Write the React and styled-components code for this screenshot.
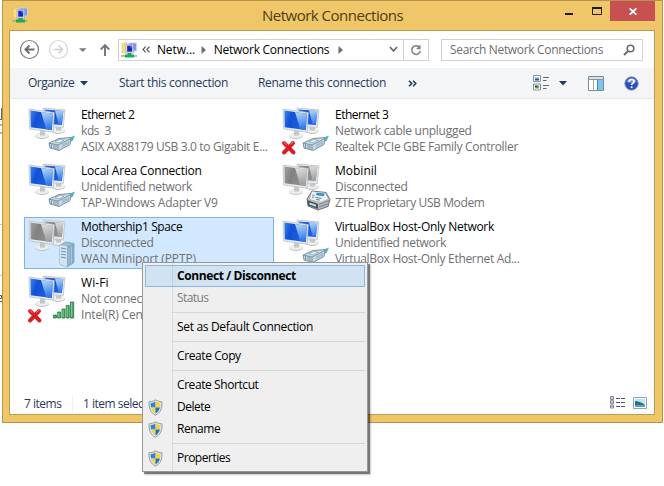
import React from "react";
import styled, { createGlobalStyle, css } from "styled-components";

const GlobalStyle = createGlobalStyle`
  * { box-sizing: border-box; }
  body { margin: 0; background: #fff; font: 12px/16px "Open Sans", "Noto Sans", sans-serif; color: #000; overflow: hidden; }
  svg { display: block; flex: none; }
`;

const Desktop = styled.div`
  position: relative;
  display: flex;
  width: 664px;
  height: 486px;
  background: #fff;
`;

const PageBehind = styled.div`
  width: 2px;
  flex: none;
  overflow: hidden;
`;

const Window = styled.div`
  width: 661px;
  height: 423px;
  flex: none;
  display: flex;
  flex-direction: column;
  padding: 0 7px 7px 6px;
  background: #efc668;
  border: 1px solid #b5954d;
`;

const TitleBar = styled.div`
  height: 29px;
  display: flex;
  align-items: flex-start;
  padding-left: 3px;
`;

const TitleIcon = styled.div`
  padding-top: 6px;
  width: 250px;
`;

const Label = styled.span`
  white-space: pre;
  letter-spacing: ${(p) => p.$ls || 0}px;
`;

const Title = styled(Label)`
  font-size: 15px;
  line-height: 20px;
  padding-top: 4px;
  color: #4f3d15;
  flex: 1;
`;

const WindowButton = styled.div`
  width: 27px;
  height: 20px;
  display: flex;
  align-items: center;
  justify-content: center;
`;

const CloseButton = styled(WindowButton)`
  width: 45px;
  background: #c75050;
`;

const Content = styled.div`
  flex: 1;
  display: flex;
  flex-direction: column;
  background: #fff;
  border: 1px solid #bd9c50;
`;

const NavBar = styled.div`
  height: 37px;
  display: flex;
  align-items: center;
  padding-left: 10px;
`;

const NavButtons = styled.div`
  display: flex;
  align-items: center;
  width: 98px;
`;

const AddressBar = styled.div`
  width: 311px;
  height: 22px;
  display: flex;
  align-items: center;
  border: 1px solid #d2d2d2;
  padding-left: 2px;
`;

const Crumb = styled(Label)`
  width: ${(p) => p.$w}px;
`;

const Refresh = styled.div`
  width: 25px;
  height: 20px;
  border-left: 1px solid #d2d2d2;
  display: flex;
  align-items: center;
  justify-content: center;
`;

const SearchBox = styled.div`
  width: 202px;
  height: 22px;
  margin-left: 12px;
  padding: 0 7px 0 8px;
  display: flex;
  align-items: center;
  justify-content: space-between;
  border: 1px solid #d2d2d2;
  color: #6d6d6d;
`;

const CommandBar = styled.div`
  height: 31px;
  display: flex;
  align-items: center;
  padding-left: 18px;
  background: #f4f5f7;
  border-bottom: 1px solid #e4e8f0;
  color: #27395c;
`;

const Command = styled.div`
  width: ${(p) => p.$w}px;
  display: flex;
  align-items: center;
  gap: ${(p) => p.$gap || 6}px;
`;

const List = styled.div`
  flex: 1;
  display: grid;
  grid-template-columns: 250px 250px;
  grid-auto-rows: 52px;
  gap: 4px;
  padding: 6px 0 0 14px;
`;

const Item = styled.div`
  display: flex;
  gap: 4px;
  border: 1px solid transparent;
  ${(p) =>
    p.$selected &&
    css`
      background: #d1e8ff;
      border-color: #7fb4e4;
    `}
`;

const ItemText = styled.div`
  display: flex;
  flex-direction: column;
  padding-top: 1px;
  white-space: nowrap;
`;

const Detail = styled(Label)`
  color: #6f7072;
`;

const StatusBar = styled.div`
  height: 23px;
  display: flex;
  align-items: flex-start;
  padding: 5px 7px 0 14px;
  color: #2b3a60;
`;

const StatusCount = styled(Label)`
  width: 49px;
  border-right: 1px solid #eef0f4;
  margin-right: 10px;
`;

const StatusText = styled(Label)`
  flex: 1;
`;

const ViewModes = styled.div`
  display: flex;
  gap: 8px;
`;

const Menu = styled.div`
  position: absolute;
  left: 142px;
  top: 262px;
  width: 226px;
  height: 210px;
  padding: 2px;
  border: 1px solid #979797;
  background: linear-gradient(90deg, #efefef 0 29px, #dcdcdc 29px 30px, #efefef 30px);
  box-shadow: 2px 2px 1px rgba(0, 0, 0, 0.45), 3px 3px 2px rgba(0, 0, 0, 0.15);
`;

const MenuItem = styled.div`
  height: 22px;
  display: flex;
  align-items: center;
  border: 1px solid transparent;
  color: ${(p) => (p.$disabled ? "#7a7a7a" : "#000")};
  ${(p) =>
    p.$active &&
    css`
      background: linear-gradient(90deg, transparent 26px, #bcd0e6 26px 27px, transparent 27px), #d1e2f2;
      border-color: #8ab6e2;
      font-weight: 700;
    `}
`;

const MenuIcon = styled.div`
  width: 31px;
  padding-left: 2px;
`;

const Separator = styled.div`
  height: 1px;
  margin: 3px 0 3px 27px;
  background: #d5d5d5;
`;

const NetIcon = () => (
  <svg width="17" height="16" viewBox="0 0 17 16">
    <path d="M1 1.500l5-1v10.500H1z" fill="#f7e07c" stroke="#d9c365" strokeWidth=".6" />
    <path d="M8 1h7.500v8H8z" fill="#7e97d8" stroke="#c8d3ee" />
    <path d="M5 2.500h7.500v8.500H5z" fill="#dfe7f8" stroke="#8899c4" strokeWidth=".6" />
    <path d="M6.200 3.700h5v6h-5z" fill="#1d24b8" />
    <path d="M8 3.700h3.200v3z" fill="#4f6be8" />
    <path d="M0 14h16" stroke="#8fb5a2" strokeWidth="1.600" />
    <path d="M6.500 11h4v1.500H13v3H4v-3h2.500z" fill="#23a659" />
  </svg>
);

const Gradients = () => (
  <svg width="0" height="0">
    <defs>
      <linearGradient id="screen-on" x1="0" y1="0" x2="1" y2="0.3">
        <stop offset="0" stopColor="#3f86ee" />
        <stop offset=".35" stopColor="#1350d6" />
        <stop offset="1" stopColor="#1c62e0" />
      </linearGradient>
      <linearGradient id="screen-off" x1="0" y1="0" x2="1" y2="0.3">
        <stop offset="0" stopColor="#a2a2a2" />
        <stop offset=".4" stopColor="#818181" />
        <stop offset="1" stopColor="#949494" />
      </linearGradient>
      <linearGradient id="shine-on" x1="0" y1="0" x2="0.2" y2="1">
        <stop offset="0" stopColor="#b9dbfb" />
        <stop offset="1" stopColor="#2f79ea" />
      </linearGradient>
      <linearGradient id="shine-off" x1="0" y1="0" x2="0.2" y2="1">
        <stop offset="0" stopColor="#dedede" />
        <stop offset="1" stopColor="#a0a0a0" />
      </linearGradient>
    </defs>
  </svg>
);

const Monitor = ({ d, shine, screen, off, base }) => (
  <g>
    <ellipse cx={base[0]} cy={base[1] + 0.5} rx="7" ry="2.9" fill="#c0c3c5" />
    <ellipse cx={base[0]} cy={base[1]} rx="6.700" ry="2.500" fill="#eceeef" />
    <path d={`M${base[0] - 2} ${base[1]}v-6h5v6z`} fill="#c3c7c9" />
    <path d={d} fill="#e3e7e9" stroke="#b9bfc4" strokeWidth=".7" />
    <path d={screen} fill={`url(#screen-${off ? "off" : "on"})`} />
    <path d={shine} fill={`url(#shine-${off ? "off" : "on"})`} />
  </g>
);

const Plug = () => (
  <g strokeLinejoin="round">
    <path d="M41 33l9-3.500-2.500 5.500-7 2z" fill="#48b5bd" />
    <path d="M24 37l10-4.500 12-1-1 7-11 6-9-2.500z" fill="#c5d8e3" stroke="#6f8b9d" strokeWidth=".9" />
    <path d="M24 37l9 2 12-6M33 39v5M26.500 38v4M29 38.500v4M31 39v4" fill="none" stroke="#6d8799" strokeWidth=".8" />
    <path d="M30 35.500l5-2 4 .5-5 3z" fill="#eff6fa" stroke="#7895a8" strokeWidth=".6" />
    <path d="M37 38l7-3v3l-7 3.500z" fill="#a4bfd2" />
  </g>
);

const Modem = () => (
  <g strokeLinejoin="round">
    <path d="M28 37l5-8 14 1.500 4 7-2 7-10 3.500-10-4z" fill="#b4bcc2" stroke="#60676c" strokeWidth=".9" />
    <path d="M33 29.500l13 1.500 3 6-8 3-10-3z" fill="#edf0f2" />
    <path d="M37.500 30.500l8 1-.5 2.800-8-1z" fill="#3594cc" />
    <path d="M33.500 33l2 .3M33 35l2 .3M36.500 35.500l6 .8M37 37.500l4 .6" stroke="#6f7a81" />
    <path d="M28.500 38l10.500 4v5l-10-3.500z" fill="#4c545a" />
    <path d="M30.500 40.500l6.500 2.200v2l-6.500-2.200z" fill="#c1dfe8" />
    <path d="M40 42.500l10-4M40 45l9-3" stroke="#7b8489" />
  </g>
);

const Server = () => (
  <g>
    <path d="M35 27l6-3 8 1.500v19L42 49l-7-3z" fill="#9dbcd5" stroke="#6d93b3" strokeWidth=".7" />
    <path d="M35 27l7 1.500V49l-7-3z" fill="#d4e4f0" />
    <path d="M36 30l5 1M36 33l5 1M36 36l5 1M36 39l5 1" stroke="#7096b6" strokeWidth="1.100" />
    <path d="M42 28.500l7-3v19l-7 4.500z" fill="#82a9c8" />
    <path d="M44 29.500v17M46.500 28.500v17" stroke="#bad3e4" strokeWidth=".8" />
  </g>
);

const Signal = () => (
  <g fill="#48a969" stroke="#247844" strokeWidth=".8">
    <path d="M28.500 41h3v3h-3zM32.700 38h3v6h-3zM37 35h3v9h-3zM41.200 31.500h3v12.500h-3zM45.500 28h3.200v16h-3.200z" />
    <path d="M33.700 39v4M38 36v7M42.200 32.500v10.500M46.500 29v14" stroke="#94d6a8" />
  </g>
);

const RedCross = () => (
  <g fill="none" strokeLinecap="round">
    <path d="M5 37l9.500 9.500M14 37L5 46.500" stroke="#c63a3f" strokeWidth="4" />
    <path d="M5 37l9.500 9.500M14 37L5 46.500" stroke="#e3151d" strokeWidth="2.500" />
    <path d="M4.800 36.300l2.500 2.400M13.800 36.300l-2 2" stroke="#f58b8c" strokeWidth="1" />
  </g>
);

const ADAPTERS = { plug: Plug, modem: Modem, server: Server, signal: Signal };

const ConnectionIcon = ({ kind, off, error }) => {
  const Adapter = ADAPTERS[kind];
  return (
    <svg width="52" height="50" viewBox="0 0 52 50">
      <Monitor
        off={off}
        base={[33, 24.5]}
        d="M18 2l22 1.800-1.800 18L20 20.500z"
        screen="M19.700 3.500l18.600 1.600-1.500 14-15.800-1.300z"
        shine="M30 4.400l8.300.7-1.500 14-3-.2z"
      />
      <Monitor
        off={off}
        base={[17, 29.5]}
        d="M4 3l25.300 3.500-1.100 19.800L4.500 23z"
        screen="M5.400 4.600l22.400 3.100-1 16.300L5.800 21.300z"
        shine="M16 6.100l11.800 1.600-1 16.300-5.500-.7z"
      />
      <Adapter />
      {error && <RedCross />}
    </svg>
  );
};

const Shield = () => (
  <svg width="15" height="17" viewBox="0 0 15 17">
    <path d="M7.500.8C5.300 2.200 3.300 2.700 1 2.800c-.2 6.800 1.500 11 6.500 13.400C12.500 13.800 14.200 9.600 14 2.800 11.700 2.700 9.700 2.200 7.500.8z" fill="#dfe2e4" stroke="#8c959c" strokeWidth=".9" />
    <path d="M7.500 2.600C5.800 3.600 4.200 4.100 2.600 4.200c0 1.700.1 3 .5 4.300h4.400z" fill="#2f86cf" />
    <path d="M7.500 2.600c1.700 1 3.300 1.500 4.900 1.600 0 1.700-.1 3-.5 4.300H7.500z" fill="#f7d33f" />
    <path d="M3.100 8.500c.8 2.800 2.100 4.600 4.400 5.900V8.500z" fill="#f7d33f" />
    <path d="M11.900 8.500c-.8 2.800-2.100 4.600-4.400 5.900V8.500z" fill="#2372bd" />
  </svg>
);

const Triangle = ({ right }) =>
  right ? (
    <svg width="5" height="8" viewBox="0 0 5 8"><path d="M.5 0v8L5 4z" fill="#6f6f6f" /></svg>
  ) : (
    <svg width="8" height="5" viewBox="0 0 8 5"><path d="M0 0h8L4 4.500z" fill="#1e395b" /></svg>
  );

const CONNECTIONS = [
  { kind: "plug", lines: [["Ethernet 2", -0.5], ["kds  3", -0.42], ["ASIX AX88179 USB 3.0 to Gigabit E...", -0.35]] },
  { kind: "plug", error: true, lines: [["Ethernet 3", -0.5], ["Network cable unplugged", -0.28], ["Realtek PCIe GBE Family Controller", -0.32]] },
  { kind: "plug", lines: [["Local Area Connection", -0.2], ["Unidentified network", -0.37], ["TAP-Windows Adapter V9", -0.22]] },
  { kind: "modem", off: true, lines: [["Mobinil", 0], ["Disconnected", -0.29], ["ZTE Proprietary USB Modem", -0.38]] },
  { kind: "server", off: true, selected: true, lines: [["Mothership1 Space", -0.38], ["Disconnected", -0.29], ["WAN Miniport (PPTP)", -0.12]] },
  { kind: "plug", lines: [["VirtualBox Host-Only Network", -0.3], ["Unidentified network", -0.37], ["VirtualBox Host-Only Ethernet Ad...", -0.31]] },
  { kind: "signal", error: true, lines: [["Wi-Fi", 0.08], ["Not connected", -0.29], ["Intel(R) Centrino(R)", -0.2]] },
];

const MENU = [
  { text: "Connect / Disconnect", ls: -0.4, active: true },
  { text: "Status", ls: -0.6, disabled: true },
  null,
  { text: "Set as Default Connection", ls: -0.32 },
  null,
  { text: "Create Copy", ls: -0.4 },
  null,
  { text: "Create Shortcut", ls: -0.42 },
  { text: "Delete", ls: -0.5, shield: true },
  { text: "Rename", ls: -0.46, shield: true },
  null,
  { text: "Properties", ls: -0.49, shield: true },
];

export default function App() {
  return (
    <Desktop>
      <GlobalStyle />
      <PageBehind>
        <svg width="2" height="486">
          <path d="M1.500 108v11M0 119.500h2M1 124v2M1 132v2" stroke="#666" />
          <path d="M0 295.500h1.500v3H0M0 301.500h2" fill="none" stroke="#555" />
          <path d="M0 224.500h2M0 275.500h2" stroke="#ccc" />
        </svg>
        <Gradients />
      </PageBehind>
      <Window>
        <TitleBar>
          <TitleIcon><NetIcon /></TitleIcon>
          <Title $ls={-0.5}>Network Connections</Title>
          <WindowButton>
            <svg width="9" height="8"><path d="M0 7h8" stroke="#221c10" strokeWidth="2" /></svg>
          </WindowButton>
          <WindowButton>
            <svg width="10" height="8"><path d="M.5 0v7.500h9V0" fill="none" stroke="#221c10" /><path d="M0 1h10" stroke="#221c10" strokeWidth="2" /></svg>
          </WindowButton>
          <CloseButton>
            <svg width="8" height="7" viewBox="0 0 8 7"><path d="M.7.3l6.600 6.400M7.300.3L.7 6.700" stroke="#fff" strokeWidth="1.700" /></svg>
          </CloseButton>
        </TitleBar>
        <Content>
          <NavBar>
            <NavButtons>
              <svg width="98" height="22" viewBox="0 0 98 22" fill="none">
                <circle cx="9.500" cy="10.500" r="9" stroke="#7c7c7c" strokeWidth="1.200" />
                <path d="M14.500 10.500H6M9.500 6.500L5.500 10.500l4 4" stroke="#6e6e6e" strokeWidth="2" />
                <circle cx="38.500" cy="10.500" r="9" stroke="#d4d4d4" strokeWidth="1.200" />
                <path d="M33.500 10.500H42M38.500 6.500l4 4-4 4" stroke="#cfcfcf" strokeWidth="1.500" />
                <path d="M59 9.300h7.500L62.800 13z" fill="#7a7a7a" />
                <path d="M85 17V6.500M80.800 10.500L85 6.200l4.200 4.300" stroke="#757575" strokeWidth="1.900" />
              </svg>
            </NavButtons>
            <AddressBar>
              <NetIcon />
              <Crumb $w={4} />
              <Crumb $w={15}>
                <svg width="8" height="7" viewBox="0 0 8 7" fill="none"><path d="M3.700.7L1 3.500l2.700 2.800M7.500.7L4.800 3.500l2.700 2.800" stroke="#555" strokeWidth="1.100" /></svg>
              </Crumb>
              <Crumb $w={44} $ls={-0.11}>Netw...</Crumb>
              <Crumb $w={13}><Triangle right /></Crumb>
              <Crumb $w={125} $ls={-0.26}>Network Connections</Crumb>
              <Crumb $w={51}><Triangle right /></Crumb>
              <Crumb $w={14}>
                <svg width="9" height="7" viewBox="0 0 9 7" fill="none"><path d="M1 1l3.500 4L8 1" stroke="#666" strokeWidth="1.700" /></svg>
              </Crumb>
              <Refresh>
                <svg width="12" height="12" viewBox="0 0 12 12" fill="none">
                  <path d="M9 2.900A4.300 4.300 0 1 0 10.300 7" stroke="#7d7d7d" strokeWidth="1.500" />
                  <path d="M10.500.5v4.700H6z" fill="#7d7d7d" />
                </svg>
              </Refresh>
            </AddressBar>
            <SearchBox>
              <Label $ls={-0.33}>Search Network Connections</Label>
              <svg width="12" height="12" viewBox="0 0 12 12" fill="none">
                <circle cx="7.500" cy="4.500" r="3.300" stroke="#6a6a6a" strokeWidth="1.600" />
                <path d="M5 7L1 11" stroke="#6a6a6a" strokeWidth="2" />
              </svg>
            </SearchBox>
          </NavBar>
          <CommandBar>
            <Command $w={91}><Label $ls={-0.49}>Organize</Label><Triangle /></Command>
            <Command $w={139}><Label $ls={-0.3}>Start this connection</Label></Command>
            <Command $w={150}><Label $ls={-0.3}>Rename this connection</Label></Command>
            <Command $w={125}>
              <svg width="10" height="7" viewBox="0 0 10 7" fill="none"><path d="M1 .7l2.800 2.800L1 6.300M5 .7l2.800 2.800L5 6.300" stroke="#1e395b" strokeWidth="1.500" /></svg>
            </Command>
            <Command $w={55} $gap={9}>
              <svg width="17" height="16" viewBox="0 0 17 16">
                <path d="M.5.5h7v6h-7zM.5 9h7v6h-7z" fill="#fff" stroke="#8293a6" />
                <path d="M2 2h4v1.500H2z" fill="#9bd1f1" /><path d="M2 3.500h4v2H2z" fill="#245784" />
                <path d="M2 10.500h4v3H2z" fill="#68a73d" /><path d="M2 10.500h2v1.500H2z" fill="#264b36" />
                <path d="M10 2.500h6M10 5.500h3.500M10 10.500h6M10 13.500h3.500" stroke="#5c6876" />
              </svg>
              <Triangle />
            </Command>
            <Command $w={36}>
              <svg width="16" height="15" viewBox="0 0 16 15">
                <path d="M.5.5h15v14H.5z" fill="#fff" stroke="#7b8998" />
                <path d="M1 1h14v2H1z" fill="#dae1e8" /><path d="M.5 3.500h15" stroke="#8694a2" />
                <path d="M5.500 4v10" stroke="#98a7b5" /><path d="M10 4h5v10h-5z" fill="#7cc5f0" /><path d="M9.500 4v10" stroke="#4187b7" />
              </svg>
            </Command>
            <Command>
              <svg width="15" height="15" viewBox="0 0 15 15">
                <circle cx="7.500" cy="7.500" r="6.700" fill="#2b4fb5" stroke="#8699cc" />
                <path d="M2.300 6a5.500 5.500 0 0 1 10.400 0Q7.500 8 2.300 6z" fill="#708cde" />
                <path d="M5.100 5.800c0-3 5-3 5-.4 0 1.700-2.500 1.700-2.500 3.600" fill="none" stroke="#fff" strokeWidth="1.700" />
                <path d="M6.700 10.400h1.800v1.700H6.700z" fill="#fff" />
              </svg>
            </Command>
          </CommandBar>
          <List>
            {CONNECTIONS.map(({ lines, selected, ...icon }) => (
              <Item key={lines[0][0]} $selected={selected}>
                <ConnectionIcon {...icon} />
                <ItemText>
                  <Label $ls={lines[0][1]}>{lines[0][0]}</Label>
                  <Detail $ls={lines[1][1]}>{lines[1][0]}</Detail>
                  <Detail $ls={lines[2][1]}>{lines[2][0]}</Detail>
                </ItemText>
              </Item>
            ))}
          </List>
          <StatusBar>
            <StatusCount $ls={-0.5}>7 items</StatusCount>
            <StatusText $ls={-0.5}>1 item selected</StatusText>
            <ViewModes>
              <svg width="15" height="13" viewBox="0 0 15 13">
                <path d="M.5.5h3v3h-3zM.5 4.700h3v3h-3zM.5 9h3v3h-3z" fill="#fff" stroke="#7f8795" />
                <path d="M1.500 2h1M1.500 6.200h1M1.500 10.500h1" stroke="#33415e" />
                <path d="M6 2.500h9M6 6.500h9M6 10.500h9" stroke="#4d5668" strokeDasharray="4 1" />
              </svg>
              <svg width="14" height="13" viewBox="0 0 14 13">
                <path d="M.5 1.500h13v11H.5z" fill="#fff" stroke="#82a6c3" />
                <path d="M2 3h10v8H2z" fill="#bfe6f3" /><path d="M2 5q5 0 10 4v2H2z" fill="#2a7180" /><path d="M2 9h10v2H2z" fill="#5aa3b0" />
              </svg>
            </ViewModes>
          </StatusBar>
        </Content>
      </Window>
      <Menu>
        {MENU.map((m, i) =>
          m ? (
            <MenuItem key={i} $active={m.active} $disabled={m.disabled}>
              <MenuIcon>{m.shield && <Shield />}</MenuIcon>
              <Label $ls={m.ls}>{m.text}</Label>
            </MenuItem>
          ) : (
            <Separator key={i} />
          )
        )}
      </Menu>
    </Desktop>
  );
}
